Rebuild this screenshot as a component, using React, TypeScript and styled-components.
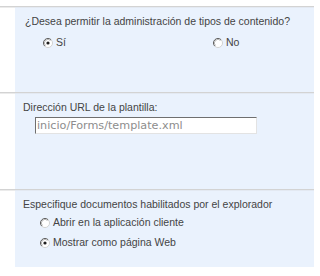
import React, { FC } from "react";
import styled, { createGlobalStyle } from "styled-components";

const Global = createGlobalStyle`
  html, body {
    margin: 0;
    padding: 0;
    background: #fff;
  }
  body {
    font-family: "Liberation Sans", Arial, sans-serif;
    font-size: 10.5px;
    color: #444;
  }
`;

const Page = styled.div`
  width: 314px;
  padding-top: 6px;
`;

const Section = styled.div<{ $h: number }>`
  display: flex;
  height: ${(p) => p.$h}px;
  border-top: 1px solid #d3d3d3;
`;

const Gutter = styled.div`
  width: 15px;
  flex: none;
  border-top: 1px solid #ebebeb;
`;

const Panel = styled.div<{ $pl: number }>`
  flex: 1;
  background: #eaf2fd;
  border-top: 1px solid #e3e9f2;
  padding: 7px 0 0 ${(p) => p.$pl}px;
  display: flex;
  flex-direction: column;
`;

const Label = styled.div`
  line-height: 13px;
  white-space: nowrap;
`;

const RadioRow = styled.div<{ $pl: number; $mt: number }>`
  display: flex;
  align-items: center;
  padding-left: ${(p) => p.$pl}px;
  margin-top: ${(p) => p.$mt}px;
`;

const Option = styled.label<{ $w?: number }>`
  display: flex;
  align-items: center;
  gap: 3px;
  width: ${(p) => (p.$w ? `${p.$w}px` : "auto")};
  line-height: 13px;
`;

const Input = styled.div`
  margin: 3px 0 0 12px;
  width: 219px;
  height: 15px;
  background: #fff;
  border: 1px solid;
  border-color: #6f6f6f #e3e3e3 #e3e3e3 #6f6f6f;
  padding-left: 1px;
  font-family: "DejaVu Sans", Verdana, sans-serif;
  font-size: 11.2px;
  line-height: 15px;
  color: #8d8d8d;
  white-space: nowrap;
`;

const Radio: FC<{ checked?: boolean }> = ({ checked }) => (
  <svg width="10" height="10" viewBox="0 0 10 10">
    <circle cx="5" cy="5" r="4.5" fill="#fff" />
    <path d="M1.8 8.2 A4.5 4.5 0 0 1 8.2 1.8" fill="none" stroke="#5a5a5a" strokeWidth="1" />
    <path d="M8.2 1.8 A4.5 4.5 0 0 1 1.8 8.2" fill="none" stroke="#d2d2d2" strokeWidth="1" />
    <path d="M2.5 7.5 A3.5 3.5 0 0 1 7.5 2.5" fill="none" stroke="#a9a9a9" strokeWidth="0.8" />
    {checked && <circle cx="5" cy="5" r="1.6" fill="#1e1e1e" />}
  </svg>
);

const App: FC = () => {
  return (
    <>
      <Global />
      <Page>
        <Section $h={85}>
          <Gutter />
          <Panel $pl={10}>
            <Label>¿Desea permitir la administración de tipos de contenido?</Label>
            <RadioRow $pl={18} $mt={8}>
              <Option $w={170}>
                <Radio checked />
                Sí
              </Option>
              <Option>
                <Radio />
                No
              </Option>
            </RadioRow>
          </Panel>
        </Section>
        <Section $h={96}>
          <Gutter />
          <Panel $pl={8}>
            <Label>Dirección URL de la plantilla:</Label>
            <Input>inicio/Forms/template.xml</Input>
          </Panel>
        </Section>
        <Section $h={77}>
          <Gutter />
          <Panel $pl={8}>
            <Label>Especifique documentos habilitados por el explorador</Label>
            <RadioRow $pl={17} $mt={5}>
              <Option>
                <Radio />
                Abrir en la aplicación cliente
              </Option>
            </RadioRow>
            <RadioRow $pl={17} $mt={7}>
              <Option>
                <Radio checked />
                Mostrar como página Web
              </Option>
            </RadioRow>
          </Panel>
        </Section>
      </Page>
    </>
  );
};

export default App;
